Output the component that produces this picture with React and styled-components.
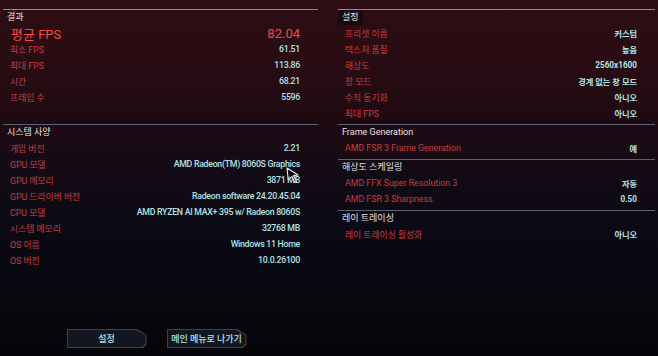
import styled, { createGlobalStyle } from "styled-components";

const GlobalStyle = createGlobalStyle`
  html, body { margin: 0; padding: 0; }
  body {
    width: 658px;
    height: 356px;
    overflow: hidden;
    background: #06060b;
    font-family: Roboto, "Noto Sans CJK KR", sans-serif;
  }
`;

const results = [
  ["최소 FPS", "61.51"],
  ["최대 FPS", "113.86"],
  ["시간", "68.21"],
  ["프레임 수", "5596"],
];

const specs = [
  ["게임 버전", "2.21"],
  ["GPU 모델", "AMD Radeon(TM) 8060S Graphics"],
  ["GPU 메모리", "3871 MB"],
  ["GPU 드라이버 버전", "Radeon software 24.20.45.04"],
  ["CPU 모델", "AMD RYZEN AI MAX+ 395 w/ Radeon 8060S"],
  ["시스템 메모리", "32768 MB"],
  ["OS 이름", "Windows 11 Home"],
  ["OS 버전", "10.0.26100"],
];

const settings = [
  ["프리셋 이름", "커스텀"],
  ["텍스처 품질", "높음"],
  ["해상도", "2560x1600"],
  ["창 모드", "경계 없는 창 모드"],
  ["수직 동기화", "아니오"],
  ["최대 FPS", "아니오"],
];

export default function App() {
  return (
    <>
      <GlobalStyle />
      <Page>
        <Panel>
          <Section $gap={19} $top>
            <Title>결과</Title>
            <BigRow>
              <span>평균 FPS</span>
              <span>82.04</span>
            </BigRow>
            {results.map(([k, v]) => (
              <Row key={k}>
                <Label>{k}</Label>
                <Value>{v}</Value>
              </Row>
            ))}
          </Section>
          <Section>
            <Title>시스템 사양</Title>
            {specs.map(([k, v]) => (
              <Row key={k}>
                <Label>{k}</Label>
                <Value>{v}</Value>
              </Row>
            ))}
          </Section>
          <Footer>
            <GameButton>
              <ButtonInner>설정</ButtonInner>
            </GameButton>
            <GameButton>
              <ButtonInner>메인 메뉴로 나가기</ButtonInner>
            </GameButton>
          </Footer>
        </Panel>

        <Panel $right>
          <Section $gap={3} $top>
            <Title $boxed>설정</Title>
            {settings.map(([k, v]) => (
              <Row key={k}>
                <Label>{k}</Label>
                <Value $bold>{v}</Value>
              </Row>
            ))}
          </Section>
          <Section $gap={3}>
            <Title>Frame Generation</Title>
            <Row>
              <Label>AMD FSR 3 Frame Generation</Label>
              <Value $bold>예</Value>
            </Row>
          </Section>
          <Section $gap={3}>
            <Title>해상도 스케일링</Title>
            <Row>
              <Label>AMD FFX Super Resolution 3</Label>
              <Value $bold>자동</Value>
            </Row>
            <Row>
              <Label>AMD FSR 3 Sharpness</Label>
              <Value $bold>0.50</Value>
            </Row>
          </Section>
          <Section $gap={3}>
            <Title>레이 트레이싱</Title>
            <Row>
              <Label>레이 트레이싱 활성화</Label>
              <Value $bold>아니오</Value>
            </Row>
          </Section>
        </Panel>

        <Cursor width="15" height="16" viewBox="0 0 15 16">
          <path
            d="M1 1 L12 8 L7.5 8.6 L10.5 14.5 L8.6 15.3 L5.8 9.6 L2.2 12.6 Z"
            fill="rgba(10,10,20,0.6)"
            stroke="#dfe9ee"
            strokeWidth="1.1"
            strokeLinejoin="round"
          />
        </Cursor>
      </Page>
    </>
  );
}

const Page = styled.div`
  position: relative;
  display: flex;
  gap: 20px;
  height: 356px;
  padding: 9px 3px 0 3px;
  box-sizing: border-box;
  background: linear-gradient(
    180deg,
    #2e0d14 0%,
    #290c13 18%,
    #1f0a12 35%,
    #130a15 48%,
    #0b0a14 65%,
    #08080f 85%,
    #050509 100%
  );
`;

const Panel = styled.div`
  display: flex;
  flex-direction: column;
  width: ${(p) => (p.$right ? "317px" : "315px")};
`;

const Section = styled.div`
  border-top: 1px solid ${(p) => (p.$top ? "#8e8a8c" : "#5b6272")};
  padding-bottom: ${(p) => p.$gap || 0}px;
  padding-right: 18px;
`;

const Title = styled.div`
  width: fit-content;
  height: 15px;
  line-height: 15px;
  padding: 0 4px;
  font-size: 9px;
  color: #e4e4e6;
  background: ${(p) => (p.$boxed ? "rgba(8, 8, 12, 0.5)" : "transparent")};
`;

const Row = styled.div`
  display: flex;
  justify-content: space-between;
  align-items: center;
  height: 16px;
  padding-left: 7px;
  font-size: 8.8px;
`;

const BigRow = styled(Row)`
  font-size: 13px;
  color: #ef4b48;
  padding-left: 8px;
`;

const Label = styled.span`
  color: #c93e40;
`;

const Value = styled.span`
  color: #b0e2e6;
  font-size: ${(p) => (p.$bold ? "8.2px" : "8.8px")};
  font-weight: ${(p) => (p.$bold ? 700 : 500)};
  letter-spacing: ${(p) => (p.$bold ? "0" : "-0.3px")};
`;

const Footer = styled.div`
  margin-top: auto;
  display: flex;
  justify-content: center;
  gap: 20px;
  padding: 0 8px 8px 0;
`;

const GameButton = styled.div`
  width: 80px;
  height: 19px;
  padding: 1px;
  box-sizing: border-box;
  background: #5e3439;
  clip-path: polygon(0 0, 88% 0, 100% 30%, 100% 80%, 96% 100%, 0 100%);
`;

const ButtonInner = styled.div`
  height: 100%;
  display: flex;
  align-items: center;
  justify-content: center;
  background: #111620;
  color: #b0e6ea;
  font-size: 9px;
  font-weight: 500;
  clip-path: polygon(0 0, 87.5% 0, 100% 30%, 100% 80%, 96% 100%, 0 100%);
`;

const Cursor = styled.svg`
  position: absolute;
  left: 286px;
  top: 167px;
`;
